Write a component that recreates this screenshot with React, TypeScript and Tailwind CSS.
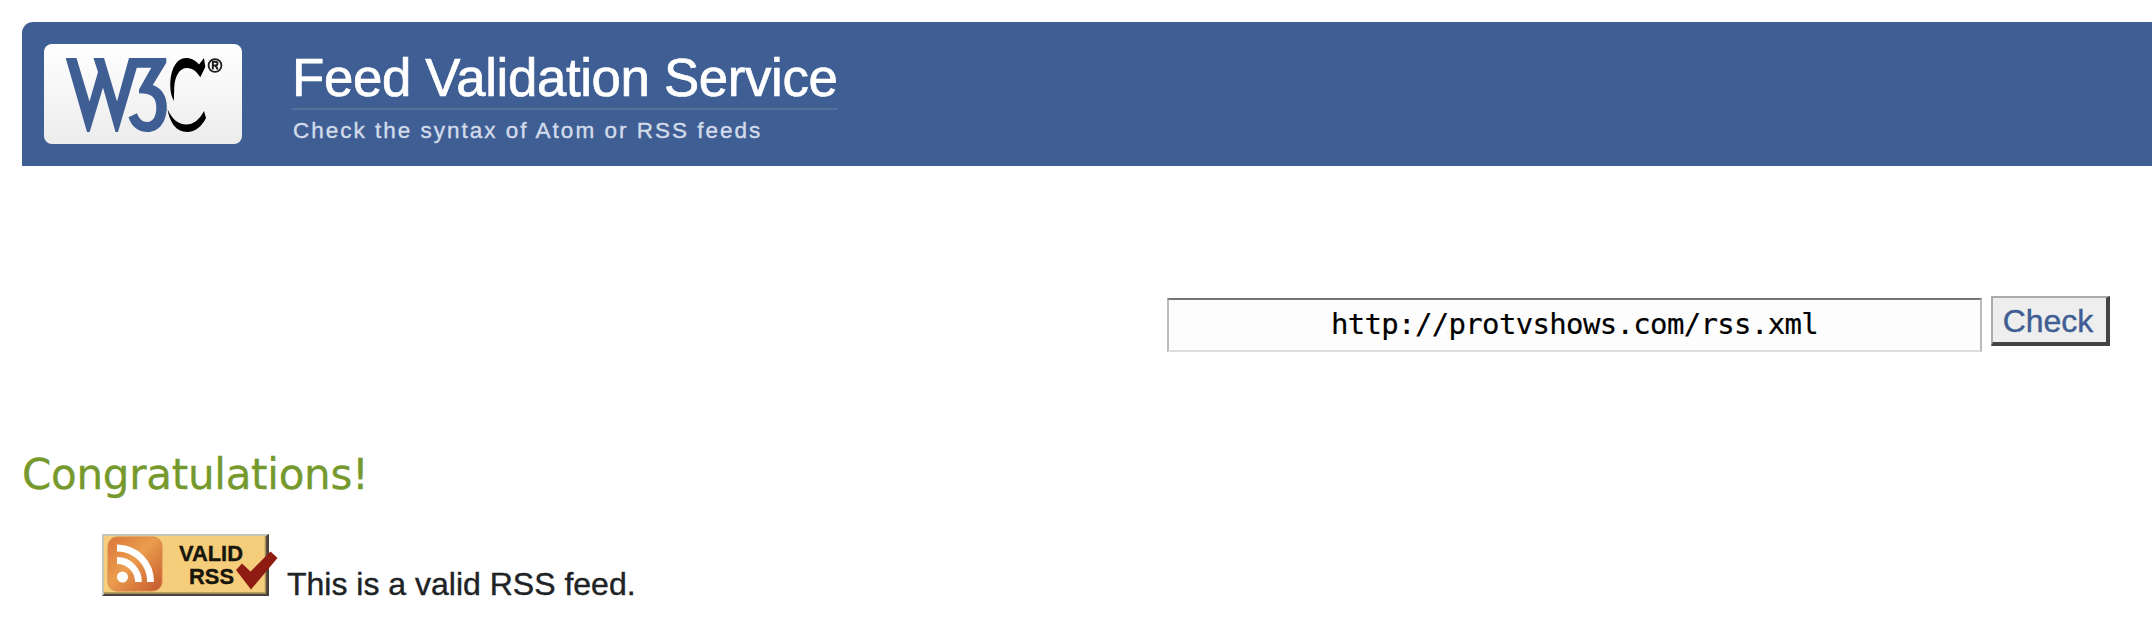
function W3CLogo() {
  return (
    <svg className="block h-[100px] w-[198px]" viewBox="0 0 198 100" role="img" aria-label="W3C">
      <defs>
        <linearGradient id="plate" x1="0" y1="0" x2="0" y2="1">
          <stop offset="0" stopColor="#ffffff" />
          <stop offset="1" stopColor="#ececec" />
        </linearGradient>
      </defs>
      <rect width="198" height="100" rx="8" fill="url(#plate)" />
      <path
        fill="#3f5e93"
        d="M21.700 14H32.500L45.500 57.500L54 28L49.500 14H60L73 57.500L85 14H122.300V18.700L108.800 41C118 44.500 122.800 52 122.800 62.500C122.800 78 115 88 103.500 88C94 88 87.500 82.500 84.500 73.300L93 69.300C95 75 98.500 78 103 78C109 78 112.300 72.500 112.300 63.500C112.300 53.500 107.500 49.300 95 49.300V45.500L107.300 23.700H92.800L74 88H71.500L59 43.500L45.700 88H43Z"
      />
      <path
        fill="#000"
        d="M160 14L161.300 23L156.300 33.300C152.500 27.500 149 24 143 24C135.500 24 130.800 32 130.300 43L129.800 57C127.500 52 126.300 48 126.300 42C126.300 25 132.500 14 142 14C147.500 14 151.500 16.500 155 20.500Z"
      />
      <path
        fill="#000"
        d="M123.500 65C128 75.500 134.500 80.500 142 80.500C149.500 80.500 155 76 160 67L162 74C158 82 151.500 88 143 88C132 88 125.500 78 123.500 65Z"
      />
      <circle cx="171" cy="21.500" r="6.400" fill="none" stroke="#1c1c1c" strokeWidth="1.800" />
      <path d="M168.800 25.500V17.700H171.300C174.300 17.700 174.300 21.500 171.300 21.500H168.800M171.500 21.500L173.800 25.500" fill="none" stroke="#1c1c1c" strokeWidth="1.900" />
    </svg>
  );
}

function ValidBadge() {
  return (
    <svg className="block h-[62px] w-[176px] shrink-0" viewBox="0 0 176 62" role="img" aria-label="Valid RSS">
      <defs>
        <linearGradient id="feed" x1="0" y1="0" x2="1" y2="1">
          <stop offset="0" stopColor="#d9763a" />
          <stop offset="0.450" stopColor="#eb9d4d" />
          <stop offset="1" stopColor="#c4562e" />
        </linearGradient>
      </defs>
      <rect width="167" height="62" fill="#c6c4b8" />
      <path d="M167 0V62H0L3 59.500H164V2Z" fill="#48423a" />
      <rect x="2" y="2" width="162" height="57" fill="#f6cd7a" />
      <path d="M163.500 2V59H2" fill="none" stroke="#a98c55" strokeWidth="1.500" />
      <rect x="6" y="3" width="54" height="54" rx="9" fill="url(#feed)" stroke="#d98a50" strokeWidth="1" />
      <circle cx="20.500" cy="43" r="5.500" fill="#fff" />
      <path d="M15 26.500A21.500 21.500 0 0 1 36.500 48M15 14A33.500 33.500 0 0 1 48.500 48" fill="none" stroke="#fff" strokeWidth="6.800" />
      <text x="77" y="26.500" fontFamily="Liberation Sans, sans-serif" fontWeight="700" fontSize="22.500" textLength="64" lengthAdjust="spacingAndGlyphs" fill="#17150c" stroke="#17150c" strokeWidth="0.400">VALID</text>
      <text x="87" y="49.500" fontFamily="Liberation Sans, sans-serif" fontWeight="700" fontSize="22.500" textLength="45" lengthAdjust="spacingAndGlyphs" fill="#17150c" stroke="#17150c" strokeWidth="0.400">RSS</text>
      <path d="M134 36L140 29.500L148.500 37.500L168.500 17.500L175.500 24L149 55.500Z" fill="#8e1c12" />
    </svg>
  );
}

export default function App() {
  return (
    <div className="h-[636px] w-full overflow-hidden bg-white pt-[22px] pl-[22px] font-['Liberation_Sans',Arial,sans-serif]">
      <header className="flex h-36 items-start rounded-tl-[11px] bg-[#3f5e93] pt-[22px] pl-[22px]">
        <W3CLogo />
        <div className="ml-[50px] w-[546px] whitespace-nowrap">
          <h1 className="h-[66px] border-b-2 border-[#56709c] pt-1 text-[52.8px] leading-[60px] tracking-[-0.36px] text-white [-webkit-text-stroke:0.7px_currentColor]">
            Feed Validation Service
          </h1>
          <p className="pt-[7px] pl-px text-[22.5px] leading-[28px] tracking-[2px] text-[#d2dbea] [-webkit-text-stroke:0.4px_currentColor]">
            Check the syntax of Atom or RSS feeds
          </p>
        </div>
      </header>

      <form className="mt-[130px] mr-[42px] flex items-start justify-end gap-[9px]" onSubmit={(e) => e.preventDefault()}>
        <input
          className="mt-0.5 h-[54px] w-[815px] border-2 border-t-[#767676] border-r-[#bbbbbb] border-b-[#dddddd] border-l-[#bbbbbb] bg-[#fdfdfd] pb-[3px] text-center font-['DejaVu_Sans_Mono',monospace] text-[29px] tracking-[-0.66px] text-black outline-none [-webkit-text-stroke:0.2px_currentColor]"
          defaultValue="http://protvshows.com/rss.xml"
          aria-label="Feed address"
        />
        <button className="h-[50px] w-[119px] border-t-2 border-r-4 border-b-4 border-l-2 border-t-[#aaaaaa] border-r-[#444444] border-b-[#444444] border-l-[#aaaaaa] bg-[#eeeeee] pr-[3px] text-[32px] leading-[46px] text-[#3f5e93] [-webkit-text-stroke:0.4px_currentColor]">
          Check
        </button>
      </form>

      <h2 className="mt-[97px] font-['DejaVu_Sans',Verdana,sans-serif] text-[42px] leading-[52px] tracking-[-0.27px] text-[#75992d] [-webkit-text-stroke:0.3px_currentColor]">
        Congratulations!
      </h2>
      <div className="mt-[33px] ml-20 flex items-start gap-[9px]">
        <ValidBadge />
        <p className="mt-[32px] text-[32px] leading-[36px] whitespace-nowrap text-[#202326] [-webkit-text-stroke:0.4px_currentColor]">This is a valid RSS feed.</p>
      </div>
    </div>
  );
}
